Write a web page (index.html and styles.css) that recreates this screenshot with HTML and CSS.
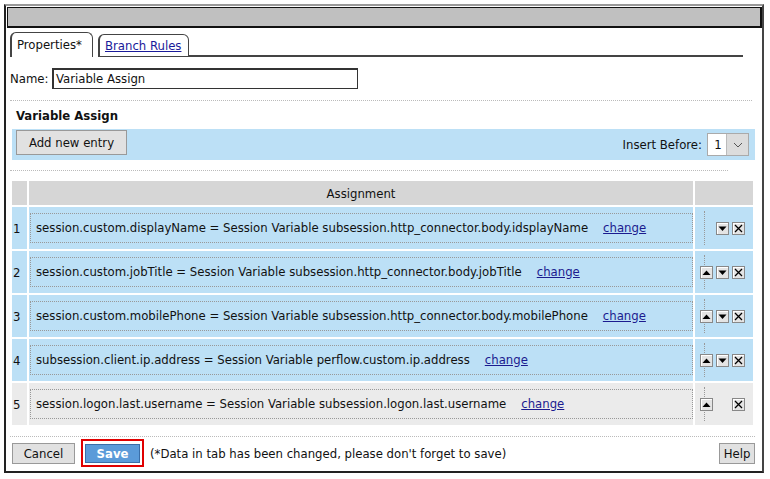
FILE: index.html
```html
<!DOCTYPE html>
<html>
<head>
<meta charset="utf-8">
<link rel="stylesheet" href="styles.css">
</head>
<body>
<div class="window">
  <div class="titlebar"></div>
  <div class="content">
    <div class="tabs">
      <div class="tab active">Properties*</div>
      <div class="tab"><a href="#">Branch Rules</a></div>
      <div class="tabline"></div>
    </div>
    <div class="namerow">
      <label>Name:</label>
      <div class="input">Variable Assign</div>
    </div>
    <div class="dots d1"></div>
    <div class="section-title">Variable Assign</div>
    <div class="toolbar">
      <div class="btn add">Add new entry</div>
      <div class="insert">
        <span>Insert Before:</span>
        <div class="select"><span class="val">1</span><span class="arrow"><svg width="14" height="16" viewBox="0 0 14 16"><path d="M3 7 L7 11 L11 7" fill="none" stroke="#555" stroke-width="1"/></svg></span></div>
      </div>
    </div>
    <div class="dots d2"></div>
    <table class="grid">
      <thead>
        <tr><th class="num"></th><th class="asg">Assignment</th><th class="act"></th></tr>
      </thead>
      <tbody>
        <tr class="blue">
          <td class="num">1</td>
          <td class="asg"><div class="box"><span class="expr">session.custom.displayName = Session Variable subsession.http_connector.body.idsplayName</span><a href="#">change</a></div></td>
          <td class="act"><div class="acts"><span class="slot"></span><span class="ico down"></span><span class="ico del"></span></div></td>
        </tr>
        <tr class="blue">
          <td class="num">2</td>
          <td class="asg"><div class="box"><span class="expr">session.custom.jobTitle = Session Variable subsession.http_connector.body.jobTitle</span><a href="#">change</a></div></td>
          <td class="act"><div class="acts"><span class="ico up"></span><span class="ico down"></span><span class="ico del"></span></div></td>
        </tr>
        <tr class="blue">
          <td class="num">3</td>
          <td class="asg"><div class="box"><span class="expr">session.custom.mobilePhone = Session Variable subsession.http_connector.body.mobilePhone</span><a href="#">change</a></div></td>
          <td class="act"><div class="acts"><span class="ico up"></span><span class="ico down"></span><span class="ico del"></span></div></td>
        </tr>
        <tr class="blue">
          <td class="num">4</td>
          <td class="asg"><div class="box"><span class="expr">subsession.client.ip.address = Session Variable perflow.custom.ip.address</span><a href="#">change</a></div></td>
          <td class="act"><div class="acts"><span class="ico up"></span><span class="ico down"></span><span class="ico del"></span></div></td>
        </tr>
        <tr class="gray">
          <td class="num">5</td>
          <td class="asg"><div class="box"><span class="expr">session.logon.last.username = Session Variable subsession.logon.last.username</span><a href="#">change</a></div></td>
          <td class="act"><div class="acts"><span class="ico up"></span><span class="slot"></span><span class="ico del"></span></div></td>
        </tr>
      </tbody>
    </table>
    <div class="dots d3"></div>
    <div class="footer">
      <div class="btn cancel">Cancel</div>
      <div class="savewrap"><div class="btn save">Save</div></div>
      <span class="note">(*Data in tab has been changed, please don't forget to save)</span>
      <div class="btn help">Help</div>
    </div>
  </div>
</div>
</body>
</html>
```
FILE: styles.css
```css
* { box-sizing: border-box; }
html, body { margin: 0; padding: 0; background: #fff; }
body {
  font-family: Tahoma, "DejaVu Sans Condensed", "Liberation Sans", Arial, sans-serif;
  font-size: 13px;
  color: #111;
}
.window {
  margin: 4px 0 0 4px;
  width: 760px;
  height: 469px;
  border: 2px solid #222;
  border-top-color: #999;
  border-right-color: #444;
  background: #fff;
}
.titlebar {
  height: 21px;
  margin: 1px 0 0 1px;
  width: 755px;
  background: #c0c0c0;
  border: 2px solid #111;
  border-top-width: 1px;
  border-left-width: 1px;
}
.content { padding: 0 0 0 4px; }

/* tabs */
.tabs { display: flex; align-items: flex-end; height: 29px; padding-top: 4px; }
.tab {
  height: 25px;
  border: 1px solid #444;
  border-left-width: 2px;
  border-bottom: none;
  border-radius: 6px 6px 0 0;
  padding: 4px 5px 0 5px;
  background: #fff;
  margin-right: 5px;
}
.tab.active { width: 83px; }
.tab:not(.active) { width: 91px; height: 23px; border-bottom: 1px solid #444; padding-top: 3px; }
.tab a { color: #1a1a9a; }
.tabline { flex: 0 0 554px; margin-left: -5px; border-bottom: 2px solid #444; height: 1px; }

.namerow { display: flex; align-items: center; margin-top: 11px; height: 21px; }
.namerow label { width: 42px; }
.input {
  width: 306px; height: 21px;
  border: 1px solid #333; border-top-width: 2px; border-left-width: 2px;
  padding: 0 2px;
  line-height: 17px;
  background: #fff;
}

.dots { border-top: 1px dotted #bbb; height: 0; }
.d1 { margin-top: 11px; width: 742px; }
.section-title { font-weight: bold; font-size: 13px; margin: 7px 0 0 6px; height: 16px; line-height: 16px; }
.toolbar {
  margin: 5px 0 0 2px;
  width: 743px; height: 31px;
  background: #bce0f6;
  display: flex; align-items: center; justify-content: space-between;
  padding: 0 6px 0 4px;
}
.btn {
  background: #e1e1e1;
  border: 1px solid #999;
  display: flex; align-items: center; justify-content: center;
}
.add { width: 111px; height: 25px; margin-top: -4px; }
.insert { display: flex; align-items: center; gap: 5px; margin-top: -1px; }
.select {
  display: flex; height: 23px; width: 42px;
  border: 1px solid #aaa; background: #fff;
}
.select .val { width: 18px; text-align: center; line-height: 21px; padding-left: 2px; }
.select .arrow { flex: 1; background: #dcdcdc; border-left: 1px solid #bbb; display: flex; align-items: center; justify-content: center; }

.d2 { margin-top: 10px; width: 718px; }

.grid {
  margin: 8px 0 0 0;
  border-collapse: separate;
  border-spacing: 2px;
  width: 745px;
  table-layout: fixed;
}
.grid th {
  background: #d6d6d6; height: 24px; font-weight: normal; padding: 0;
}
.grid th.num, .grid td.num { width: 15px; }
.grid th.act, .grid td.act { width: 58px; }
.grid td { height: 42px; padding: 0; }
.grid tr.blue td { background: #bce0f6; }
.grid tr.gray td { background: #ebebeb; }
.grid td.num { padding-left: 1px; }
.grid td.asg { padding: 0 0 0 1px; }
.box {
  height: 30px;
  border: 1px dotted #999;
  display: flex; align-items: center;
  padding-left: 5px;
  padding-bottom: 2px;
  white-space: nowrap;
}
.box a { color: #1b1b8f; margin-left: 15px; }
.acts { display: flex; align-items: center; padding-left: 5px; gap: 3px; position: relative; height: 30px; }
.acts::before {
  content: ""; position: absolute; left: 9px; top: -2px; height: 34px; border-left: 1px dotted #999;
}
.ico, .slot { width: 13px; height: 13px; display: inline-block; position: relative; }
.ico {
  border: 1px solid #888;
  background: #e4e4e4 no-repeat center;
  box-shadow: inset 1px 1px 0 #fff;
}
.ico.up { background-image: url("data:image/svg+xml;utf8,<svg xmlns='http://www.w3.org/2000/svg' width='11' height='11'><path d='M1.5 8 L9.5 8 L5.5 3.5 Z' fill='black'/></svg>"); }
.ico.down { background-image: url("data:image/svg+xml;utf8,<svg xmlns='http://www.w3.org/2000/svg' width='11' height='11'><path d='M1.5 3.5 L9.5 3.5 L5.5 8 Z' fill='black'/></svg>"); }
.ico.del { background-image: url("data:image/svg+xml;utf8,<svg xmlns='http://www.w3.org/2000/svg' width='11' height='11'><path d='M2 2 L9 9 M9 2 L2 9' stroke='black' stroke-width='1.3'/></svg>"); }

.d3 { margin-top: 9px; width: 745px; }
.footer {
  display: flex; align-items: center; height: 30px; margin-top: 1px; padding-left: 2px; width: 745px;
}
.cancel { width: 63px; height: 21px; }
.savewrap {
  margin-left: 6px; border: 2px solid #e00000; padding: 3px 2px 2px 2px; height: 28px;
}
.save {
  width: 55px; height: 19px;
  background: #5b9bd9; border: 1px solid #3a6ea8;
  color: #fff; font-weight: bold; font-size: 13px;
}
.note { margin-left: 6px; }
.help { margin-left: auto; width: 36px; height: 21px; }
```
